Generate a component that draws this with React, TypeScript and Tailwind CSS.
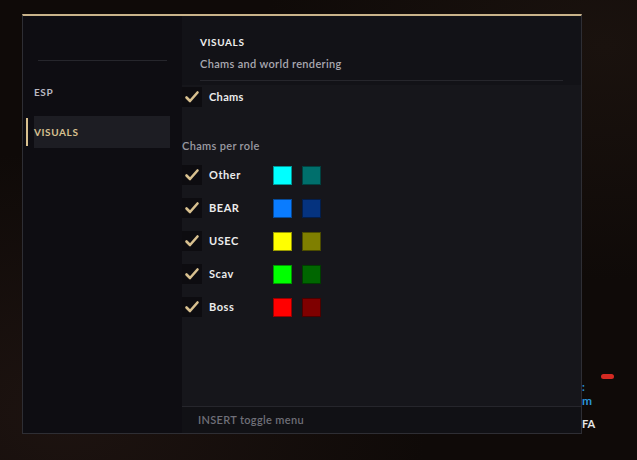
import React from 'react';

type Role = {
  name: string;
  visible: string;
  occluded: string;
};

const roles: Role[] = [
  { name: 'Other', visible: 'bg-[#00ffff]', occluded: 'bg-[#006f6c]' },
  { name: 'BEAR', visible: 'bg-[#0a7cff]', occluded: 'bg-[#05337f]' },
  { name: 'USEC', visible: 'bg-[#ffff00]', occluded: 'bg-[#7f7f00]' },
  { name: 'Scav', visible: 'bg-[#00ff00]', occluded: 'bg-[#006600]' },
  { name: 'Boss', visible: 'bg-[#ff0000]', occluded: 'bg-[#7f0000]' },
];

const CheckBox = () => (
  <div className="w-5 h-5 flex-shrink-0 bg-[#0d0c10] flex items-center justify-center">
    <svg width="20" height="20" viewBox="0 0 20 20" fill="none">
      <path
        d="M4.5 10.5 L8 14 L15.5 5.5"
        stroke="#d8c08f"
        strokeWidth="2.6"
        strokeLinecap="round"
        strokeLinejoin="round"
      />
    </svg>
  </div>
);

const Swatch = ({ color }: { color: string }) => (
  <div className={`w-[19px] h-[19px] border border-black/40 ${color}`} />
);

const NavItem = ({ label, active }: { label: string; active?: boolean }) => (
  <div
    className={`relative h-8 mx-[11px] mr-[12px] flex items-center text-[10px] font-bold tracking-[0.06em] ${
      active ? 'bg-[#1d1d23] text-[#d8c08f]' : 'text-[#b9b9c1]'
    }`}
  >
    {active && <div className="absolute left-[-8px] top-[2px] w-[2px] h-[28px] bg-[#d8c08f]" />}
    {label}
  </div>
);

export default function App() {
  return (
    <div className="relative w-[637px] h-[460px] overflow-hidden bg-[#0f0a08] bg-[radial-gradient(ellipse_at_10%_90%,#1d1310_0%,transparent_45%),radial-gradient(ellipse_at_95%_10%,#1a120e_0%,transparent_40%)] font-['Lato',sans-serif] pt-[14px] pl-[22px]">
      {/* game HUD bits peeking out behind the menu */}
      <div className="absolute left-[601px] top-[374px] w-[13px] h-[5px] rounded-full bg-[#d42a22]" />
      <div className="absolute left-[582px] top-[380px] text-[11px] leading-[14px] text-[#2a95d8] font-bold">:</div>
      <div className="absolute left-[582px] top-[394px] text-[12px] leading-[14px] text-[#2a95d8] font-bold">m</div>
      <div className="absolute left-[582px] top-[417px] text-[11px] leading-[14px] text-[#e6e6e6] font-bold">FA</div>

      <div className="relative w-[560px] h-[420px] flex border-x border-b border-[#2e2e34] border-t-2 border-t-[#c9b38a]">
        {/* sidebar */}
        <div className="w-[159px] bg-[#0e0d12] flex flex-col">
          <div className="mt-[44px] mx-[15px] h-px bg-[#26262c]" />
          <div className="mt-[15px] flex flex-col gap-2">
            <NavItem label="ESP" />
            <NavItem label="VISUALS" active />
          </div>
        </div>

        {/* content */}
        <div className="flex-1 flex flex-col bg-[#16161b]">
          <div className="bg-[#121217] pt-[19px] px-[18px] pb-[4px]">
            <div className="text-[10px] leading-[14px] font-bold tracking-[0.06em] text-[#eeeeee]">VISUALS</div>
            <div className="mt-[8px] text-[11px] leading-[14px] font-semibold tracking-[0.03em] text-[#a9a9b1]">
              Chams and world rendering
            </div>
            <div className="mt-[9px] h-px bg-[#26262c]" />
          </div>

          <div className="flex-1 pt-[2px]">
            <div className="flex items-center gap-[7px]">
              <CheckBox />
              <span className="text-[11px] font-bold tracking-[0.03em] text-[#ececec]">Chams</span>
            </div>

            <div className="mt-[32px] text-[11px] leading-[14px] font-semibold tracking-[0.03em] text-[#9a9aa2]">
              Chams per role
            </div>

            <div className="mt-[12px] flex flex-col gap-[13px]">
              {roles.map((role) => (
                <div key={role.name} className="flex items-center">
                  <CheckBox />
                  <span className="ml-[7px] w-[64px] text-[11px] font-bold tracking-[0.05em] text-[#ececec]">
                    {role.name}
                  </span>
                  <div className="flex gap-[10px]">
                    <Swatch color={role.visible} />
                    <Swatch color={role.occluded} />
                  </div>
                </div>
              ))}
            </div>
          </div>

          <div className="h-[27px] border-t border-[#26262c] bg-[#111115] flex items-center pl-[16px] text-[11px] font-semibold tracking-[0.03em] text-[#6f6f78]">
            INSERT toggle menu
          </div>
        </div>
      </div>
    </div>
  );
}
